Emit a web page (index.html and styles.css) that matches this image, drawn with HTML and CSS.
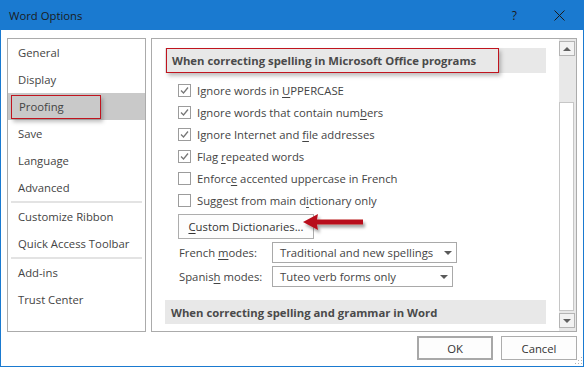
FILE: index.html
```html
<!DOCTYPE html>
<html lang="en">
<head>
    <meta charset="UTF-8">
    <title>Word Options</title>
    <link rel="stylesheet" href="styles.css">
</head>
<body>
    <div class="window">
        <div class="titlebar">
            <span class="title">Word Options</span>
            <span class="help">?</span>
            <svg class="close" width="11" height="11" viewBox="0 0 11 11">
                <path d="M0.5 0.5 L10.5 10.5 M10.5 0.5 L0.5 10.5" stroke="#1b1b1b" stroke-width="1" fill="none"/>
            </svg>
        </div>

        <div class="content">
            <div class="panels">
                <ul class="nav">
                    <li>General</li>
                    <li>Display</li>
                    <li class="selected"><span class="mark-nav">Proofing</span></li>
                    <li>Save</li>
                    <li>Language</li>
                    <li>Advanced</li>
                    <li class="sep"></li>
                    <li>Customize Ribbon</li>
                    <li>Quick Access Toolbar</li>
                    <li class="sep"></li>
                    <li>Add-ins</li>
                    <li>Trust Center</li>
                </ul>

                <div class="main">
                    <div class="pane">
                        <div class="section">
                            <span class="mark">When correcting spelling in Microsoft Office programs</span>
                        </div>

                        <div class="options">
                            <div class="check"><span class="box checked"></span><span>Ignore words in <u>U</u>PPERCASE</span></div>
                            <div class="check"><span class="box checked"></span><span>Ignore words that contain num<u>b</u>ers</span></div>
                            <div class="check"><span class="box checked"></span><span>Ignore Internet and <u>f</u>ile addresses</span></div>
                            <div class="check"><span class="box checked"></span><span>Flag <u>r</u>epeated words</span></div>
                            <div class="check"><span class="box"></span><span>Enforc<u>e</u> accented uppercase in French</span></div>
                            <div class="check"><span class="box"></span><span>Suggest from main d<u>i</u>ctionary only</span></div>
                        </div>

                        <div class="dict-row">
                            <button class="btn dict"><u>C</u>ustom Dictionaries...</button>
                            <svg class="arrow" width="72" height="26" viewBox="0 0 72 26">
                                <defs>
                                    <filter id="arrow-shadow" x="-20%" y="-50%" width="140%" height="200%">
                                        <feDropShadow dx="2" dy="3" stdDeviation="1.6" flood-color="#000" flood-opacity="0.35"/>
                                    </filter>
                                </defs>
                                <path d="M3 9 L18 1 L17 6.5 L63 6.5 L63 11.5 L17 11.5 L18 17 Z" fill="#b8101c" filter="url(#arrow-shadow)"/>
                            </svg>
                        </div>

                        <div class="mode-row">
                            <span class="mode-label">French <u>m</u>odes:</span>
                            <div class="select french"><span>Traditional and new spellings</span><span class="caret"></span></div>
                        </div>
                        <div class="mode-row">
                            <span class="mode-label">Spanis<u>h</u> modes:</span>
                            <div class="select spanish"><span>Tuteo verb forms only</span><span class="caret"></span></div>
                        </div>

                        <div class="section second">When correcting spelling and grammar in Word</div>
                    </div>

                    <div class="scrollbar">
                        <div class="scroll-btn"><span class="tri up"></span></div>
                        <div class="thumb"></div>
                        <div class="scroll-btn"><span class="tri down"></span></div>
                    </div>
                </div>
            </div>

            <div class="footer">
                <button class="btn action default">OK</button>
                <button class="btn action">Cancel</button>
            </div>
        </div>

        <svg class="grip" width="8" height="8" viewBox="0 0 8 8">
            <rect x="6" y="0" width="1" height="1" fill="#b0b0b0"/>
            <rect x="3" y="3" width="1" height="1" fill="#b0b0b0"/>
            <rect x="6" y="3" width="1" height="1" fill="#b0b0b0"/>
            <rect x="0" y="6" width="1" height="1" fill="#b0b0b0"/>
            <rect x="3" y="6" width="1" height="1" fill="#b0b0b0"/>
            <rect x="6" y="6" width="1" height="1" fill="#b0b0b0"/>
        </svg>
    </div>
</body>
</html>
```

FILE: styles.css
```css
:root {
    --accent: #1a7ad0;
    --text: #444444;
    --panel-border: #ababab;
    --band: #e8e8e8;
    --mark-red: #c0141e;
    --ui-size: 11.3px;
}

* {
    margin: 0;
    padding: 0;
    box-sizing: border-box;
}

body {
    width: 584px;
    height: 369px;
    background: #ffffff;
    font-family: 'Open Sans', 'Noto Sans', sans-serif;
    font-size: var(--ui-size);
    color: var(--text);
    overflow: hidden;
}

.window {
    position: relative;
    width: 584px;
    height: 367px;
    background: #ffffff;
    border: 1px solid var(--accent);
    border-top: none;
    display: flex;
    flex-direction: column;
}

.titlebar {
    height: 30px;
    margin: 0 -1px;
    background: var(--accent);
    display: flex;
    align-items: center;
    padding-left: 9px;
    color: #1b1b1b;
    font-size: var(--ui-size);
}

.title {
    flex: 1;
}

.help {
    margin-right: 37px;
    font-size: 12px;
}

.close {
    margin-right: 19px;
}

.content {
    flex: 1;
    padding: 8px 6px 0 6px;
    display: flex;
    flex-direction: column;
}

.panels {
    display: flex;
    gap: 5px;
    height: 294px;
}

/* left navigation */
.nav {
    list-style: none;
    width: 139px;
    border: 1px solid var(--panel-border);
}

.nav li {
    height: 27px;
    line-height: 27px;
    padding-left: 10px;
    white-space: nowrap;
}

.nav li.selected {
    background: #c9c9c9;
    padding-left: 3px;
    display: flex;
    align-items: center;
}

.nav li.sep {
    height: 2px;
    margin: 0 3px;
    background: #e3e3e3;
}

.mark-nav {
    display: inline-block;
    width: 90px;
    height: 24px;
    line-height: 22px;
    padding-left: 7px;
    border: 1px solid var(--mark-red);
    box-shadow: 2px 3px 4px rgba(0, 0, 0, 0.25);
}

/* right pane */
.main {
    flex: 1;
    display: flex;
    border: 1px solid var(--panel-border);
}

.pane {
    flex: 1;
    padding: 9px 13px 0 13px;
    display: flex;
    flex-direction: column;
}

.section {
    height: 25px;
    background: var(--band);
    font-weight: bold;
    color: #4a4a4a;
    display: flex;
    align-items: center;
}

.section.second {
    height: 24px;
    margin-top: 13px;
    padding-left: 6px;
}

.mark {
    display: inline-block;
    width: 333px;
    height: 25px;
    line-height: 23px;
    margin-left: 1px;
    padding-left: 5px;
    border: 1px solid var(--mark-red);
    box-shadow: 2px 3px 4px rgba(0, 0, 0, 0.25);
}

.options {
    margin-top: 6px;
    padding-left: 13px;
}

.check {
    height: 22px;
    display: flex;
    align-items: center;
    white-space: nowrap;
}

.box {
    width: 13px;
    height: 13px;
    margin-right: 6px;
    border: 1px solid #9c9c9c;
    background: #ffffff;
    flex-shrink: 0;
}

.box.checked {
    background: #ffffff url("data:image/svg+xml,%3Csvg xmlns='http://www.w3.org/2000/svg' width='11' height='11'%3E%3Cpath d='M2 5.5 L4.5 8 L9 2.5' stroke='%23777' stroke-width='1.3' fill='none'/%3E%3C/svg%3E") no-repeat center;
}

u {
    text-decoration: underline;
    text-underline-offset: 2px;
}

.dict-row {
    position: relative;
    margin-top: 3px;
    padding-left: 13px;
    display: flex;
}

.btn {
    font-family: inherit;
    font-size: var(--ui-size);
    color: #333333;
    background: #fdfdfd;
    border: 1px solid #adadad;
    cursor: pointer;
}

.dict {
    width: 136px;
    height: 25px;
}

.arrow {
    position: absolute;
    left: 135px;
    top: -1px;
}

.mode-row {
    height: 21px;
    margin-top: 3px;
    padding-left: 13px;
    display: flex;
    align-items: center;
    white-space: nowrap;
}

.mode-label {
    width: 94px;
    padding-left: 1px;
}

.select {
    height: 21px;
    border: 1px solid #a9a9a9;
    padding: 0 4px 0 7px;
    display: flex;
    align-items: center;
    justify-content: space-between;
}

.select.french {
    width: 185px;
}

.select.spanish {
    width: 181px;
}

.caret {
    width: 0;
    height: 0;
    border-left: 4px solid transparent;
    border-right: 4px solid transparent;
    border-top: 4px solid #5a5a5a;
}

/* scrollbar */
.scrollbar {
    width: 17px;
    background: #e8e8e8;
    display: flex;
    flex-direction: column;
    align-items: flex-start;
    padding: 2px 0 3px 0;
}

.scroll-btn {
    width: 16px;
    height: 15px;
    border: 1px solid #b4b4b4;
    background: #f2f2f2;
    display: flex;
    align-items: center;
    justify-content: center;
}

.tri {
    width: 0;
    height: 0;
    border-left: 4px solid transparent;
    border-right: 4px solid transparent;
}

.tri.up {
    border-bottom: 4px solid #606060;
}

.tri.down {
    border-top: 4px solid #606060;
}

.thumb {
    flex: 1;
    width: 15px;
    margin: 46px 0 2px 0;
    background: #ffffff;
    border: 1px solid #c6c6c6;
}

/* dialog buttons */
.footer {
    display: flex;
    justify-content: flex-end;
    gap: 8px;
    margin-top: 4px;
}

.action {
    width: 76px;
    height: 24px;
}

.action.default {
    border: 2px solid #a8a8a8;
}

.grip {
    position: absolute;
    right: 0;
    bottom: 1px;
}
```
